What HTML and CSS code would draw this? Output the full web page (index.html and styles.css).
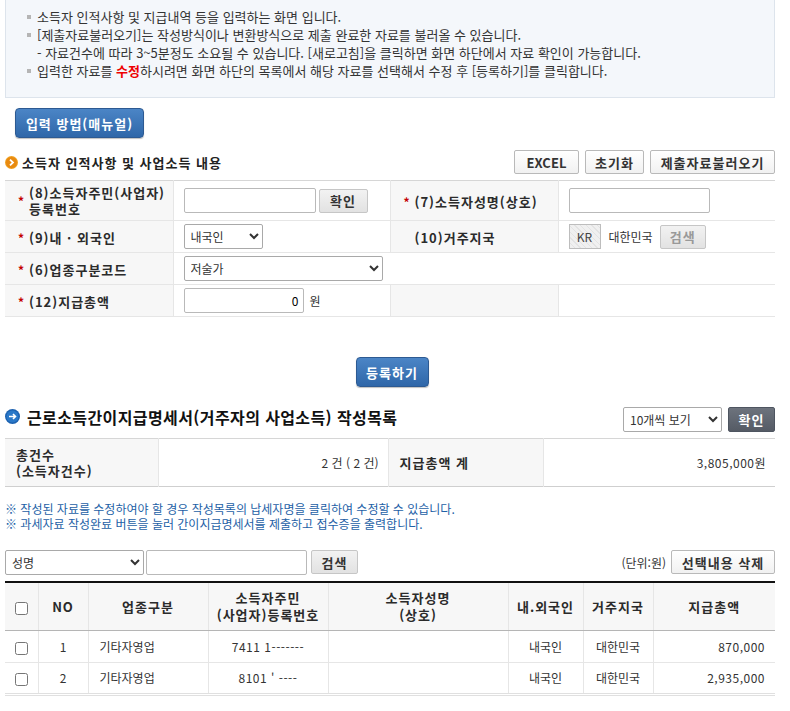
FILE: index.html
```html
<!DOCTYPE html>
<html lang="ko">
<head>
<meta charset="utf-8">
<title>근로소득간이지급명세서</title>
<link rel="stylesheet" href="styles.css">
</head>
<body>
<div class="wrap">
  <div class="info">
    <ul>
      <li>소득자 인적사항 및 지급내역 등을 입력하는 화면 입니다.</li>
      <li>[제출자료불러오기]는 작성방식이나 변환방식으로 제출 완료한 자료를 불러올 수 있습니다.</li>
      <li class="sub">- 자료건수에 따라 3~5분정도 소요될 수 있습니다. [새로고침]을 클릭하면 화면 하단에서 자료 확인이 가능합니다.</li>
      <li>입력한 자료를 <em>수정</em>하시려면 화면 하단의 목록에서 해당 자료를 선택해서 수정 후 [등록하기]를 클릭합니다.</li>
    </ul>
  </div>

  <div class="manual-row"><button class="btn-blue btn-manual">입력 방법(매뉴얼)</button></div>

  <div class="sec-head">
    <h3 class="sec-title"><span class="ico-orange"><svg width="13" height="13" viewBox="0 0 13 13"><circle cx="6.5" cy="6.5" r="6.5" fill="#f0a020"/><circle cx="6.5" cy="6.5" r="5.5" fill="#e88a10"/><path d="M5 3.6 L8 6.5 L5 9.4" stroke="#fff" stroke-width="1.8" fill="none"/></svg></span>소득자 인적사항 및 사업소득 내용</h3>
    <div class="btn-group">
      <button class="btn-white latin">EXCEL</button>
      <button class="btn-white">초기화</button>
      <button class="btn-white">제출자료불러오기</button>
    </div>
  </div>

  <table class="form-tbl">
    <colgroup><col class="c1"><col class="c2"><col class="c3"><col class="c4"></colgroup>
    <tr class="r1">
      <th><span class="req">*</span><span class="lbl">(8)소득자주민(사업자)<br>등록번호</span></th>
      <td><input type="text" class="inp w132"><button class="btn-gray">확인</button></td>
      <th><span class="req">*</span><span class="lbl">(7)소득자성명(상호)</span></th>
      <td><input type="text" class="inp w141"></td>
    </tr>
    <tr>
      <th><span class="req">*</span><span class="lbl">(9)내 · 외국인</span></th>
      <td><select class="sel w79"><option>내국인</option></select></td>
      <th><span class="req blank"></span><span class="lbl">(10)거주지국</span></th>
      <td><span class="kr">KR</span><span class="country">대한민국</span><button class="btn-gray disabled">검색</button></td>
    </tr>
    <tr>
      <th><span class="req">*</span><span class="lbl">(6)업종구분코드</span></th>
      <td colspan="3"><select class="sel w199"><option>저술가</option></select></td>
    </tr>
    <tr>
      <th><span class="req">*</span><span class="lbl">(12)지급총액</span></th>
      <td><input type="text" class="inp w120 right" value="0"><span class="won">원</span></td>
      <th></th>
      <td></td>
    </tr>
  </table>

  <div class="reg-row"><button class="btn-blue btn-reg">등록하기</button></div>

  <div class="list-head">
    <h2 class="list-title"><span class="ico-blue"><svg width="15" height="15" viewBox="0 0 15 15"><circle cx="7.5" cy="7.5" r="7.5" fill="#1d62b0"/><circle cx="7.5" cy="7.5" r="6" fill="#2a78c8"/><path d="M4 7.5 H10.5 M8 5 L10.5 7.5 L8 10" stroke="#fff" stroke-width="1.6" fill="none"/></svg></span>근로소득간이지급명세서(거주자의 사업소득) 작성목록</h2>
    <div class="list-ctrl">
      <select class="sel w99"><option>10개씩 보기</option></select>
      <button class="btn-dark">확인</button>
    </div>
  </div>

  <table class="sum-tbl">
    <colgroup><col class="s1"><col class="s2"><col class="s3"><col class="s4"></colgroup>
    <tr>
      <th>총건수<br>(소득자건수)</th>
      <td>2 건 ( 2 건)</td>
      <th>지급총액 계</th>
      <td class="blur">3,805,000원</td>
    </tr>
  </table>

  <div class="notes">
    <p>※ 작성된 자료를 수정하여야 할 경우 작성목록의 납세자명을 클릭하여 수정할 수 있습니다.</p>
    <p>※ 과세자료 작성완료 버튼을 눌러 간이지급명세서를 제출하고 접수증을 출력합니다.</p>
  </div>

  <div class="search-row">
    <div class="search-left">
      <select class="sel w139"><option>성명</option></select>
      <input type="text" class="inp w160">
      <button class="btn-gray">검색</button>
    </div>
    <div class="search-right">
      <span class="unit">(단위:원)</span>
      <button class="btn-white">선택내용 삭제</button>
    </div>
  </div>

  <table class="list-tbl">
    <colgroup>
      <col class="l1"><col class="l2"><col class="l3"><col class="l4"><col class="l5"><col class="l6"><col class="l7"><col class="l8">
    </colgroup>
    <thead>
      <tr>
        <th><input type="checkbox" class="chk"></th>
        <th class="latin">NO</th>
        <th>업종구분</th>
        <th>소득자주민<br>(사업자)등록번호</th>
        <th>소득자성명<br>(상호)</th>
        <th>내.외국인</th>
        <th>거주지국</th>
        <th>지급총액</th>
      </tr>
    </thead>
    <tbody>
      <tr>
        <td class="ctr"><input type="checkbox" class="chk"></td>
        <td class="ctr">1</td>
        <td class="lft">기타자영업</td>
        <td class="ctr blur">7411 1-------</td>
        <td></td>
        <td class="ctr">내국인</td>
        <td class="ctr">대한민국</td>
        <td class="rgt blur">870,000</td>
      </tr>
      <tr>
        <td class="ctr"><input type="checkbox" class="chk"></td>
        <td class="ctr">2</td>
        <td class="lft">기타자영업</td>
        <td class="ctr blur">8101 ' ----</td>
        <td></td>
        <td class="ctr">내국인</td>
        <td class="ctr">대한민국</td>
        <td class="rgt blur">2,935,000</td>
      </tr>
    </tbody>
  </table>
</div>
</body>
</html>
```
FILE: styles.css
```css
* { box-sizing: border-box; }
body {
  margin: 0;
  background: #fff;
  font-family: "Noto Sans CJK KR", "Liberation Sans", sans-serif;
  font-size: 12px;
  color: #333;
}
.wrap { width: 770px; margin-left: 5px; }

.info {
  background: #f4f7fb;
  border: 1px solid #dde4ec;
  border-top: none;
  height: 98px;
  padding: 8px 0 0 20px;
}
.info ul { margin: 0; padding: 0; list-style: none; }
.info li {
  position: relative;
  padding-left: 11px;
  line-height: 18px;
  color: #333;
  font-size: 13px;
}
.info li::before {
  content: "";
  position: absolute;
  left: 1px; top: 7px;
  width: 4px; height: 4px;
  background: #b5b5b5;
}
.info li.sub::before { display: none; }
.info em { font-style: normal; font-weight: bold; color: #e00; }

button { font-family: inherit; cursor: pointer; }

.manual-row { padding: 10px 0 0 10px; }
.btn-blue {
  border: 1px solid #2d5a92;
  border-radius: 4px;
  background: linear-gradient(#4b85c6, #2f67a9);
  color: #fff;
  font-weight: bold;
  font-size: 13px;
  letter-spacing: 1px;
  height: 30px;
  padding: 0;
  box-shadow: 0 1px 1px rgba(0,0,0,0.25);
}
.btn-manual { width: 129px; }

.sec-head {
  display: flex;
  justify-content: space-between;
  align-items: center;
  margin-top: 12px;
  height: 24px;
}
.sec-title {
  margin: 0;
  font-size: 13px;
  font-weight: bold;
  letter-spacing: 1px;
  color: #222;
  display: flex;
  align-items: center;
  gap: 4px;
}
.ico-orange, .ico-blue { display: inline-flex; }
.btn-group { display: flex; gap: 6px; }
.btn-white {
  height: 24px;
  padding: 0 9px;
  border: 1px solid #b9b9b9;
  border-radius: 2px;
  background: linear-gradient(#fff, #f1f1f1);
  font-size: 13px;
  font-weight: bold;
  letter-spacing: 1px;
  color: #333;
}
.btn-white.latin, th.latin { letter-spacing: 0; }
.btn-group .btn-white:nth-child(1) { width: 65px; }
.btn-group .btn-white:nth-child(2) { width: 59px; }
.btn-group .btn-white:nth-child(3) { width: 125px; }

.form-tbl {
  width: 770px;
  margin-top: 6px;
  border-collapse: collapse;
  table-layout: fixed;
  border-top: 1px solid #d6d6d6;
  border-bottom: 1px solid #cfcfcf;
}
.form-tbl .c1 { width: 168px; }
.form-tbl .c2 { width: 217px; }
.form-tbl .c3 { width: 168px; }
.form-tbl .c4 { width: 217px; }
.form-tbl tr { height: 32px; }
.form-tbl tr.r1 { height: 40px; }
.form-tbl th, .form-tbl td {
  border-bottom: 1px solid #e6e6e6;
  border-right: 1px solid #e6e6e6;
  padding: 0;
  vertical-align: middle;
}
.form-tbl th:last-child, .form-tbl td:last-child { border-right: none; }
.form-tbl th {
  background: #f7f7f7;
  text-align: left;
  padding-left: 13px;
  font-size: 13px;
  font-weight: bold;
  letter-spacing: 1px;
  color: #2b2b2b;
  white-space: nowrap;
}
.form-tbl th .lbl { display: inline-block; vertical-align: middle; line-height: 16px; }
.req {
  display: inline-block;
  width: 11px;
  color: #c40000;
  font-size: 12px;
  letter-spacing: 0;
  vertical-align: middle;
}
.form-tbl td { padding-left: 10px; white-space: nowrap; }
.inp {
  height: 25px;
  border: 1px solid #b9b9b9;
  border-radius: 2px;
  font-family: inherit;
  font-size: 12px;
  padding: 0 4px;
  vertical-align: middle;
  background: #fff;
}
.inp.right { text-align: right; }
.w132 { width: 132px; }
.w141 { width: 141px; }
.w120 { width: 120px; }
.w160 { width: 161px; }
.sel {
  height: 25px;
  border: 1px solid #a9a9a9;
  border-radius: 2px;
  font-family: inherit;
  font-size: 12px;
  color: #333;
  background: #fff;
  vertical-align: middle;
  padding: 0 2px;
}
.w79 { width: 79px; }
.w199 { width: 199px; }
.w99 { width: 99px; }
.w139 { width: 139px; }
.btn-gray {
  height: 24px;
  width: 49px;
  margin-left: 3px;
  border: 1px solid #c6c6c6;
  border-radius: 2px;
  background: linear-gradient(#f2f2f2, #e2e2e2);
  font-size: 13px;
  font-weight: bold;
  letter-spacing: 1px;
  color: #333;
  padding: 0;
  vertical-align: middle;
}
.btn-gray.disabled { color: #999; width: 46px; margin-left: 7px; }
.kr {
  display: inline-block;
  width: 32px;
  height: 25px;
  line-height: 23px;
  border: 1px solid #bdbdbd;
  text-align: center;
  vertical-align: middle;
  background: repeating-linear-gradient(45deg, #f0f0f0 0 3px, #e3e3e3 3px 4px);
  color: #444;
  letter-spacing: 0;
  font-weight: normal;
}
.country { margin-left: 8px; vertical-align: middle; color: #333; }
.won { margin-left: 6px; vertical-align: middle; }

.reg-row { display: flex; justify-content: center; margin-top: 40px; padding-left: 4px; }
.btn-reg { width: 73px; }

.list-head {
  display: flex;
  justify-content: space-between;
  align-items: center;
  margin-top: 20px;
  height: 25px;
}
.list-title {
  margin: -6px 0 0 0;
  font-size: 16px;
  font-weight: bold;
  letter-spacing: 0.4px;
  color: #111;
  display: flex;
  align-items: center;
  gap: 7px;
}
.list-ctrl { display: flex; gap: 6px; align-items: center; }
.btn-dark {
  width: 47px;
  height: 25px;
  border: 1px solid #4e5560;
  border-radius: 2px;
  background: linear-gradient(#6d737d, #555b65);
  color: #fff;
  font-weight: bold;
  font-size: 13px;
  letter-spacing: 1px;
  padding: 0;
}

.sum-tbl {
  width: 770px;
  margin-top: 6px;
  border-collapse: collapse;
  table-layout: fixed;
  border-top: 1px solid #d6d6d6;
  border-bottom: 1px solid #cfcfcf;
}
.sum-tbl .s1 { width: 153px; }
.sum-tbl .s2 { width: 230px; }
.sum-tbl .s3 { width: 155px; }
.sum-tbl .s4 { width: 232px; }
.sum-tbl tr { height: 48px; }
.sum-tbl th, .sum-tbl td { border-right: 1px solid #e6e6e6; padding: 0; }
.sum-tbl td:last-child { border-right: none; }
.sum-tbl th {
  background: #f7f7f7;
  text-align: left;
  padding-left: 11px;
  font-size: 13px;
  font-weight: bold;
  letter-spacing: 1px;
  color: #2b2b2b;
  line-height: 16px;
}
.sum-tbl td { text-align: right; padding-right: 9px; font-size: 12px; color: #333; }
.blur { color: #222; letter-spacing: 0.5px; }

.notes { margin-top: 14px; }
.notes p { margin: 0; line-height: 15px; font-size: 12px; color: #1d5fa6; }

.search-row {
  display: flex;
  justify-content: space-between;
  align-items: center;
  margin-top: 19px;
  height: 24px;
}
.search-left { display: flex; align-items: center; gap: 2px; }
.search-left .btn-gray { margin-left: 2px; width: 47px; }
.search-right { display: flex; align-items: center; gap: 5px; }
.unit { color: #333; font-size: 12px; }
.search-right .btn-white { width: 104px; padding: 0; }

.list-tbl {
  width: 770px;
  margin-top: 7px;
  border-collapse: collapse;
  table-layout: fixed;
  border-top: 2px solid #111;
  border-bottom: 3px double #e0e0e0;
}
.list-tbl .l1 { width: 33px; }
.list-tbl .l2 { width: 50px; }
.list-tbl .l3 { width: 120px; }
.list-tbl .l4 { width: 120px; }
.list-tbl .l5 { width: 180px; }
.list-tbl .l6 { width: 75px; }
.list-tbl .l7 { width: 70px; }
.list-tbl .l8 { width: 122px; }
.list-tbl thead tr { height: 48px; }
.list-tbl thead th {
  background: #f7f7f7;
  font-size: 13px;
  font-weight: bold;
  letter-spacing: 1px;
  color: #2b2b2b;
  line-height: 17px;
  border-right: 1px solid #e6e6e6;
  border-bottom: 1px solid #b5b5b5;
  padding: 0;
}
.list-tbl th:last-child, .list-tbl td:last-child { border-right: none; }
.list-tbl tbody tr { height: 32px; }
.list-tbl tbody td {
  border-right: 1px solid #e6e6e6;
  border-bottom: 1px solid #e6e6e6;
  font-size: 12px;
  color: #333;
  padding: 0;
}
.list-tbl tbody tr:last-child td { border-bottom: none; }
.ctr { text-align: center; }
.lft { text-align: left; padding-left: 11px !important; }
.rgt { text-align: right; padding-right: 10px !important; }
.chk { width: 13px; height: 13px; margin: 0; vertical-align: middle; }
```
